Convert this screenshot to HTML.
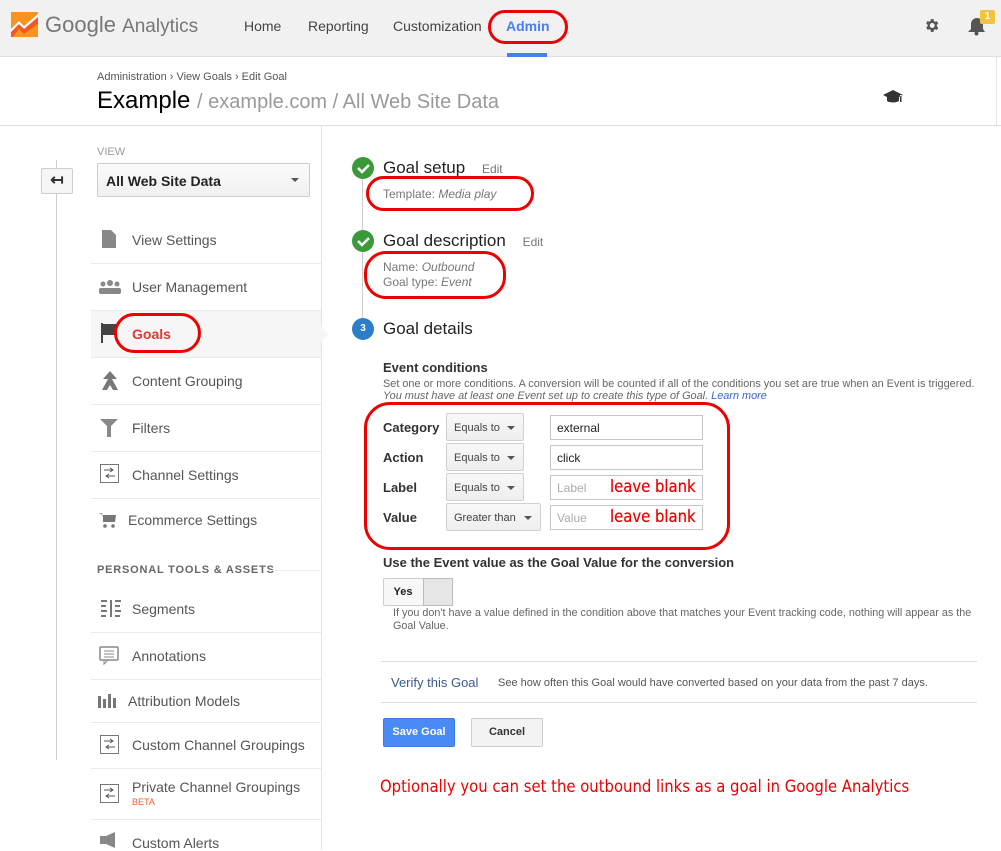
<!DOCTYPE html>
<html><head><meta charset="utf-8"><style>
*{margin:0;padding:0;box-sizing:border-box}
body{width:1001px;height:850px;overflow:hidden;background:#fff;font-family:"Liberation Sans",Arial,sans-serif;position:relative;color:#333}
.a{position:absolute;white-space:nowrap}
.hdr{position:absolute;left:0;top:0;width:1001px;height:57px;background:#f1f1f1;border-bottom:1px solid #e0e0e0}
.nav{font-size:14px;color:#444;top:18px}
.sep{position:absolute;left:91px;width:230px;height:1px;background:#ebebeb}
.it{font-size:14px;color:#555}
.red{border:3px solid #e00;border-radius:22px;position:absolute}
.lbl{font-size:13px;font-weight:bold;color:#333}
.sel{position:absolute;height:28px;border:1px solid #d0d0d0;border-radius:2px;background:linear-gradient(#f8f8f8,#eee);font-size:11px;color:#444;padding:8px 0 0 7px}
.sel:after{content:"";position:absolute;right:8px;top:12px;border:4px solid transparent;border-top:4px solid #555}
.inp{position:absolute;left:550px;width:153px;height:25px;border:1px solid #c6c6c6;font-size:12px;padding:5px 0 0 6px;color:#222;white-space:nowrap}
.lb{color:#e00;font-size:16.5px;position:absolute;left:59px;top:1px;font-family:"DejaVu Sans Condensed","Liberation Sans",sans-serif;white-space:nowrap;text-shadow:0 0 .4px #e00}
.ic{position:absolute;left:99px}
</style></head><body>
<div class="hdr"></div>
<svg class="a" style="left:11px;top:12px" width="27" height="25"><rect width="27" height="25" fill="#f7931e"/><path d="M0 25V17L8 9L13 14L27 2V12L13 22L8 17L2 25Z" fill="#f15a24"/><path d="M0 17L8 9L13 14L27 2V5L13 17L8 12L0 20Z" fill="#fff"/></svg>
<div class="a" style="left:45px;top:12px;font-size:22px;color:#777">Google <span style="font-size:19px">Analytics</span></div>
<div class="a nav" style="left:244px">Home</div>
<div class="a nav" style="left:308px">Reporting</div>
<div class="a nav" style="left:393px">Customization</div>
<div class="a nav" style="left:506px;color:#4a7ef0;font-weight:bold">Admin</div>
<div class="red" style="left:488px;top:10px;width:80px;height:34px"></div>
<div class="a" style="left:507px;top:53px;width:40px;height:4px;background:#4a7ef0"></div>
<svg class="a" style="left:923px;top:17px" width="17" height="17" viewBox="0 0 24 24"><path fill="#555" d="M19.4 13a7.5 7.5 0 000-2l2.1-1.6-2-3.5-2.5 1a7 7 0 00-1.7-1L15 3h-4l-.4 2.7a7 7 0 00-1.700 1l-2.5-1-2 3.5L6.6 11a7.5 7.5 0 000 2l-2.1 1.6 2 3.5 2.5-1a7 7 0 001.7 1L11 21h4l.4-2.7a7 7 0 001.7-1l2.5 1 2-3.5zM13 15.5a3.5 3.5 0 110-7 3.5 3.5 0 010 7z"/></svg>
<svg class="a" style="left:967px;top:15px" width="20" height="21"><path d="M1 17h17l-2-3V9a6 6 0 00-12 0v5z" fill="#555"/><circle cx="9.5" cy="18.5" r="2" fill="#555"/></svg>
<div class="a" style="left:980px;top:10px;width:15px;height:14px;background:#f4c242;border-radius:2px;color:#fff;font-size:10px;font-weight:bold;text-align:center;line-height:14px">1</div>
<div class="a" style="left:0;top:125px;width:1001px;height:1px;background:#ddd"></div>
<div class="a" style="left:996px;top:57px;width:1px;height:68px;background:#e5e5e5"></div>
<div class="a" style="left:97px;top:71px;font-size:11px;color:#555">Administration › View Goals › Edit Goal</div>
<div class="a" style="left:97px;top:87px;font-size:24px;color:#000">Example <span style="font-size:20px;color:#999">/ example.com / All Web Site Data</span></div>
<svg class="a" style="left:883px;top:90px" width="21" height="14"><path d="M0 5L10 0L20 5L10 10Z M4 7v4c3 2 9 2 12 0V7l-6 3z M17 5v7h1.5V5z" fill="#333"/></svg>
<div class="a" style="left:321px;top:126px;width:1px;height:724px;background:#e3e3e3"></div>
<div class="a" style="left:56px;top:160px;width:1px;height:600px;background:#ccc"></div>
<div class="a" style="left:41px;top:168px;width:32px;height:26px;border:1px solid #ccc;border-radius:2px;background:#f5f5f5;font-size:16px;text-align:center;line-height:23px;font-weight:bold">↤</div>
<div class="a" style="left:97px;top:146px;font-size:11px;color:#999">VIEW</div>
<div class="a" style="left:97px;top:163px;width:213px;height:34px;border:1px solid #ccc;border-radius:2px;background:linear-gradient(#fafafa,#f0f0f0);font-size:14px;font-weight:bold;color:#222;padding:9px 0 0 8px">All Web Site Data</div>
<div class="a" style="left:291px;top:178px;border:4px solid transparent;border-top:4px solid #555"></div>
<div class="a" style="left:91px;top:311px;width:230px;height:46px;background:#f6f6f6"></div>
<div class="a" style="left:321px;top:326px;width:0;height:0;border:8px solid transparent;border-left:7px solid #f6f6f6"></div>
<div class="sep" style="top:263px"></div><div class="sep" style="top:310px"></div><div class="sep" style="top:357px"></div><div class="sep" style="top:404px"></div><div class="sep" style="top:451px"></div><div class="sep" style="top:498px"></div>
<div class="sep" style="top:632px"></div><div class="sep" style="top:679px"></div><div class="sep" style="top:722px"></div><div class="sep" style="top:768px"></div><div class="sep" style="top:819px"></div>
<svg class="ic" style="top:230px;left:102px" width="14" height="18"><path d="M0 0h9l5 5v13H0z" fill="#888"/></svg>
<svg class="ic" style="top:280px" width="22" height="14"><circle cx="4" cy="4" r="2.5" fill="#888"/><circle cx="11" cy="3" r="3" fill="#888"/><circle cx="18" cy="4" r="2.5" fill="#888"/><rect y="8" width="22" height="6" rx="2" fill="#888"/></svg>
<svg class="ic" style="top:323px;left:101px" width="16" height="20"><rect width="2" height="20" fill="#444"/><path d="M2 1h14v11H2z" fill="#444"/></svg>
<svg class="ic" style="top:371px;left:102px" width="16" height="19"><path d="M8 0L1 8h5L0 19h5l3-5 3 5h5L10 8h5z" fill="#777"/></svg>
<svg class="ic" style="top:419px;left:100px" width="18" height="18"><path d="M0 0h18l-7 7v11H7V7z" fill="#888"/></svg>
<svg class="ic" style="top:464px;left:100px" width="19" height="19"><rect x=".5" y=".5" width="18" height="18" fill="none" stroke="#777"/><path d="M4 6h9M10 4l3 2-3 2M15 12H6M9 10l-3 2 3 2" stroke="#555" fill="none"/></svg>
<svg class="ic" style="top:511px" width="17" height="17"><path d="M0 2h3l2 9h11l1-7H4" fill="#777"/><rect x="4" y="4" width="12" height="7" fill="#777"/><circle cx="6" cy="15" r="1.8" fill="#777"/><circle cx="14" cy="15" r="1.8" fill="#777"/></svg>
<div class="a it" style="left:132px;top:232px">View Settings</div>
<div class="a it" style="left:132px;top:279px">User Management</div>
<div class="a it" style="left:132px;top:326px;color:#e33;font-weight:bold">Goals</div>
<div class="red" style="left:114px;top:313px;width:87px;height:40px"></div>
<div class="a it" style="left:132px;top:373px">Content Grouping</div>
<div class="a it" style="left:132px;top:420px">Filters</div>
<div class="a it" style="left:132px;top:467px">Channel Settings</div>
<div class="a it" style="left:128px;top:512px">Ecommerce Settings</div>
<div class="a" style="left:97px;top:564px;font-size:11px;font-weight:bold;color:#666;letter-spacing:.8px">PERSONAL TOOLS &amp; ASSETS</div>
<div class="a" style="left:268px;top:570px;width:53px;height:1px;background:#eee"></div>
<svg class="ic" style="top:600px;left:101px" width="20" height="17"><path d="M0 1h6M0 6h5M0 11h6M0 16h5M14 1h6M14 6h5M14 11h6M14 16h5" stroke="#777" stroke-width="2"/><rect x="9" width="2" height="17" fill="#777"/></svg>
<svg class="ic" style="top:646px" width="20" height="20"><rect x="1" y="1" width="18" height="13" rx="1" fill="none" stroke="#888" stroke-width="1.5"/><path d="M5 14v4l4-4M5 5h10M5 8h10M5 11h10" stroke="#888" fill="none"/></svg>
<svg class="ic" style="top:694px;left:98px" width="19" height="14"><rect y="2" width="3" height="12" fill="#777"/><rect x="5" y="5" width="3" height="9" fill="#777"/><rect x="10" y="0" width="3" height="14" fill="#777"/><rect x="15" y="4" width="3" height="10" fill="#777"/></svg>
<svg class="ic" style="top:735px;left:100px" width="19" height="19"><rect x=".5" y=".5" width="18" height="18" fill="none" stroke="#777"/><path d="M4 6h9M10 4l3 2-3 2M15 12H6M9 10l-3 2 3 2" stroke="#555" fill="none"/></svg>
<svg class="ic" style="top:784px;left:100px" width="19" height="19"><rect x=".5" y=".5" width="18" height="18" fill="none" stroke="#777"/><path d="M4 6h9M10 4l3 2-3 2M15 12H6M9 10l-3 2 3 2" stroke="#555" fill="none"/></svg>
<svg class="ic" style="top:832px;left:100px" width="20" height="16"><path d="M0 4h6L15 0v16L6 12H0z" fill="#888"/></svg>
<div class="a it" style="left:132px;top:601px">Segments</div>
<div class="a it" style="left:132px;top:648px">Annotations</div>
<div class="a it" style="left:128px;top:693px">Attribution Models</div>
<div class="a it" style="left:132px;top:737px">Custom Channel Groupings</div>
<div class="a it" style="left:132px;top:779px">Private Channel Groupings</div>
<div class="a" style="left:132px;top:797px;font-size:9px;color:#e8622a">BETA</div>
<div class="a it" style="left:132px;top:835px">Custom Alerts</div>
<div class="a" style="left:362px;top:170px;width:1px;height:160px;background:#ccc"></div>
<svg class="a" style="left:352px;top:157px" width="22" height="22"><circle cx="11" cy="11" r="11" fill="#3a9a3a"/><path d="M6 11l4 4 7-7" stroke="#fff" stroke-width="2.5" fill="none"/></svg>
<svg class="a" style="left:352px;top:230px" width="22" height="22"><circle cx="11" cy="11" r="11" fill="#3a9a3a"/><path d="M6 11l4 4 7-7" stroke="#fff" stroke-width="2.5" fill="none"/></svg>
<div class="a" style="left:352px;top:318px;width:22px;height:22px;border-radius:50%;background:#2a7fc8;color:#fff;font-size:10px;font-weight:bold;text-align:center;line-height:22px">3</div>
<div class="a" style="left:383px;top:158px;font-size:17px;color:#222">Goal setup <span style="font-size:12px;color:#777;margin-left:12px">Edit</span></div>
<div class="a" style="left:383px;top:187px;font-size:12px;color:#777">Template: <i>Media play</i></div>
<div class="red" style="left:366px;top:176px;width:168px;height:35px"></div>
<div class="a" style="left:383px;top:231px;font-size:17px;color:#222">Goal description <span style="font-size:12px;color:#777;margin-left:12px">Edit</span></div>
<div class="a" style="left:383px;top:260px;font-size:12px;color:#777;line-height:15px">Name: <i>Outbound</i><br>Goal type: <i>Event</i></div>
<div class="red" style="left:364px;top:251px;width:142px;height:48px"></div>
<div class="a" style="left:383px;top:319px;font-size:17px;color:#222">Goal details</div>
<div class="a" style="left:383px;top:360px;font-size:13px;font-weight:bold;color:#333">Event conditions</div>
<div class="a" style="left:383px;top:378px;font-size:10.9px;color:#666;line-height:12px">Set one or more conditions. A conversion will be counted if all of the conditions you set are true when an Event is triggered.<br><i>You must have at least one Event set up to create this type of Goal.</i> <span style="color:#3366cc;font-style:italic">Learn more</span></div>
<div class="red" style="left:364px;top:402px;width:366px;height:148px;border-radius:26px"></div>
<div class="a lbl" style="left:383px;top:420px">Category</div>
<div class="a lbl" style="left:383px;top:450px">Action</div>
<div class="a lbl" style="left:383px;top:480px">Label</div>
<div class="a lbl" style="left:383px;top:510px">Value</div>
<div class="sel" style="left:446px;top:413px;width:78px">Equals to</div>
<div class="sel" style="left:446px;top:443px;width:78px">Equals to</div>
<div class="sel" style="left:446px;top:473px;width:78px">Equals to</div>
<div class="sel" style="left:446px;top:503px;width:95px">Greater than</div>
<div class="inp" style="top:415px">external</div>
<div class="inp" style="top:445px">click</div>
<div class="inp" style="top:475px;color:#aaa">Label<span class="lb">leave blank</span></div>
<div class="inp" style="top:505px;color:#aaa">Value<span class="lb">leave blank</span></div>
<div class="a" style="left:383px;top:555px;font-size:13px;font-weight:bold;color:#333">Use the Event value as the Goal Value for the conversion</div>
<div class="a" style="left:383px;top:578px;width:70px;height:28px;border:1px solid #ccc;border-radius:2px;background:#f7f7f7"></div>
<div class="a" style="left:383px;top:578px;width:40px;height:28px;font-size:11px;font-weight:bold;color:#222;text-align:center;line-height:28px">Yes</div>
<div class="a" style="left:423px;top:578px;width:30px;height:28px;border:1px solid #bbb;background:#e6e6e6"></div>
<div class="a" style="left:393px;top:607px;font-size:10.8px;color:#666;line-height:13px">If you don't have a value defined in the condition above that matches your Event tracking code, nothing will appear as the<br>Goal Value.</div>
<div class="a" style="left:381px;top:661px;width:596px;height:1px;background:#ddd"></div>
<div class="a" style="left:391px;top:675px;font-size:13px;color:#3a5a8a">Verify this Goal</div>
<div class="a" style="left:498px;top:677px;font-size:11px;color:#555">See how often this Goal would have converted based on your data from the past 7 days.</div>
<div class="a" style="left:381px;top:702px;width:596px;height:1px;background:#ddd"></div>
<div class="a" style="left:383px;top:718px;width:72px;height:29px;background:#4a8af4;border:1px solid #3b7be0;border-radius:2px;color:#fff;font-size:11px;font-weight:bold;text-align:center;line-height:27px">Save Goal</div>
<div class="a" style="left:471px;top:718px;width:72px;height:29px;background:#f3f3f3;border:1px solid #ccc;border-radius:2px;color:#333;font-size:11px;font-weight:bold;text-align:center;line-height:27px">Cancel</div>
<div class="a" style="left:380px;top:777px;font-size:16.5px;color:#e00;font-family:'DejaVu Sans Condensed','Liberation Sans',sans-serif">Optionally you can set the outbound links as a goal in Google Analytics</div>
</body></html>
